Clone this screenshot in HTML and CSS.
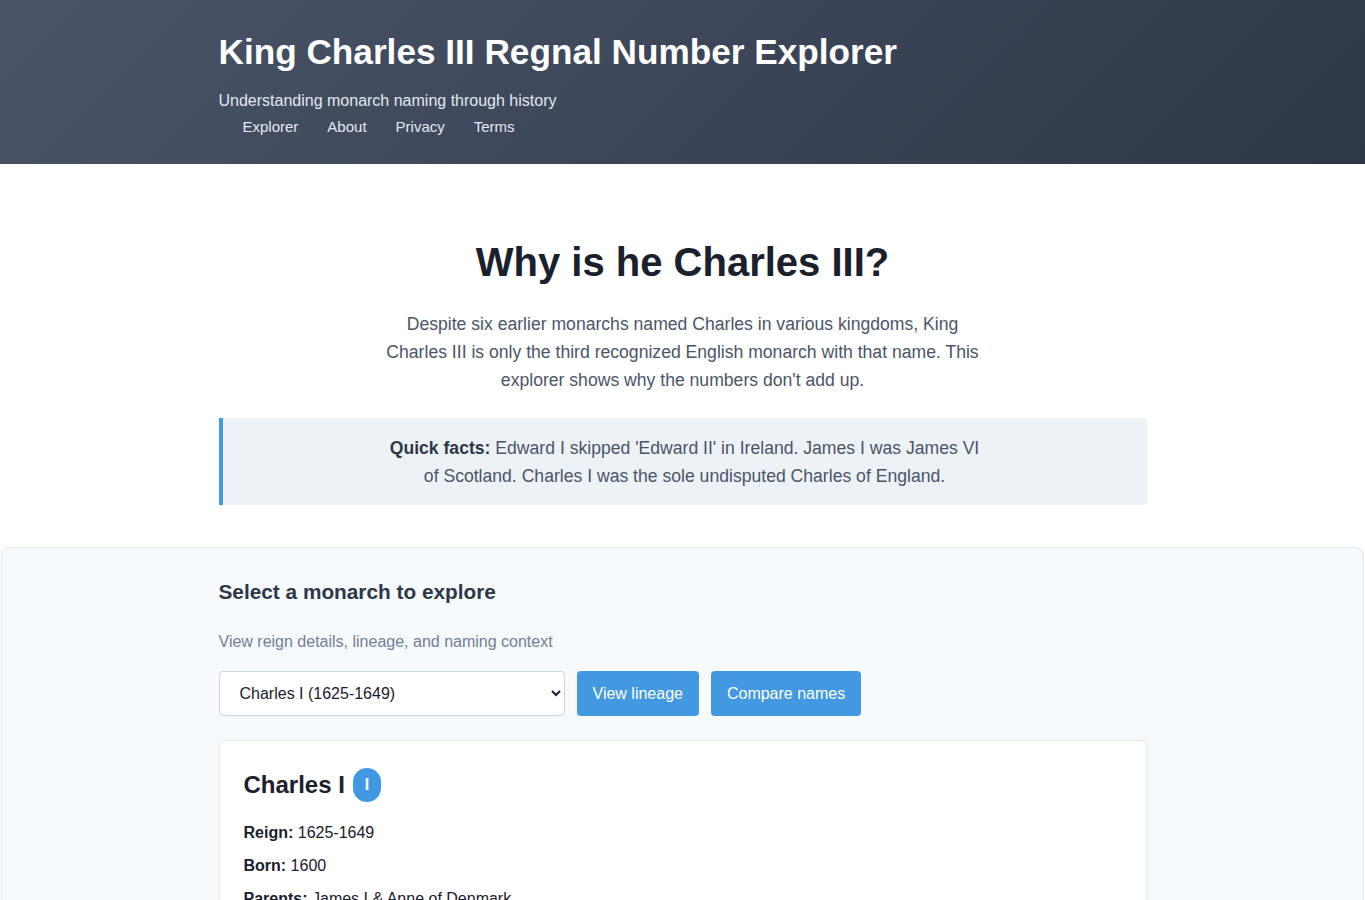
FILE: index.html
```html
<!DOCTYPE html>
<html lang="en">
<head>
    <meta charset="UTF-8">
    <meta name="viewport" content="width=device-width, initial-scale=1.0">
    <title>King Charles III Regnal Number Explorer</title>
    <link rel="stylesheet" href="styles.css">
</head>
<body>

    <header class="site-header">
        <div class="container">
            <h1>King Charles III Regnal Number Explorer</h1>
            <p class="tagline">Understanding monarch naming through history</p>
            <nav>
                <ul class="nav-links">
                    <li><a href="#">Explorer</a></li>
                    <li><a href="#">About</a></li>
                    <li><a href="#">Privacy</a></li>
                    <li><a href="#">Terms</a></li>
                </ul>
            </nav>
        </div>
    </header>

    <main>
        <section class="intro container">
            <h2>Why is he Charles III?</h2>
            <p class="lead">Despite six earlier monarchs named Charles in various kingdoms, King Charles III is only the third recognized English monarch with that name. This explorer shows why the numbers don't add up.</p>
            <div class="quick-facts">
                <p><strong>Quick facts:</strong> Edward I skipped 'Edward II' in Ireland. James I was James VI of Scotland. Charles I was the sole undisputed Charles of England.</p>
            </div>
        </section>

        <section class="explorer">
            <div class="container">
                <h3>Select a monarch to explore</h3>
                <p class="hint">View reign details, lineage, and naming context</p>
                <div class="controls">
                    <select id="monarch">
                        <option>Charles I (1625-1649)</option>
                        <option>Charles II (1660-1685)</option>
                        <option>Charles III (2022-)</option>
                    </select>
                    <button type="button">View lineage</button>
                    <button type="button">Compare names</button>
                </div>

                <div class="monarch-card">
                    <h4>Charles I <span class="numeral">I</span></h4>
                    <p><strong>Reign:</strong> 1625-1649</p>
                    <p><strong>Born:</strong> 1600</p>
                    <p><strong>Parents:</strong> James I &amp; Anne of Denmark</p>
                    <p><strong>Spouse:</strong> Henrietta Maria of France</p>
                </div>
            </div>
        </section>
    </main>

</body>
</html>
```

FILE: styles.css
```css
body {
    margin: 0;
    font-family: "Liberation Sans", Arial, sans-serif;
    color: #1a202c;
    background: #fff;
}
.container {
    max-width: 928px;
    margin: 0 auto;
}
.site-header {
    background: linear-gradient(135deg, #4a5568 0%, #2d3748 100%);
    color: #fff;
    height: 164px;
    box-sizing: border-box;
    padding-top: 31px;
}
.site-header h1 {
    margin: 0;
    font-size: 35.2px;
    line-height: 42px;
}
.tagline {
    margin: 18px 0 0;
    font-size: 16px;
    line-height: 20px;
    color: #e2e8f0;
}
.nav-links {
    list-style: none;
    margin: 7px 0 0;
    padding: 0 0 0 24px;
    display: flex;
    gap: 29px;
}
.nav-links a {
    color: #e2e8f0;
    text-decoration: none;
    font-size: 15px;
    line-height: 18px;
}
.intro {
    text-align: center;
    padding-top: 74px;
}
.intro h2 {
    margin: 0;
    font-size: 40px;
    line-height: 48px;
    color: #1a202c;
}
.lead {
    max-width: 600px;
    margin: 24px auto 0;
    font-size: 17.6px;
    line-height: 28px;
    color: #4a5568;
}
.quick-facts {
    margin-top: 24px;
    background: #edf2f7;
    border-left: 4px solid #4299e1;
    border-radius: 0 4px 4px 0;
    padding: 16px 24px 15px;
}
.quick-facts p {
    max-width: 600px;
    margin: 0 auto;
    font-size: 17.6px;
    line-height: 28px;
    color: #4a5568;
}
.quick-facts strong {
    color: #2d3748;
}
.explorer {
    margin: 42px 1px 0;
    background: #f7fafc;
    border: 1px solid #e2e8f0;
    border-radius: 8px;
    padding: 32px 0 40px;
}
.explorer h3 {
    margin: 0;
    font-size: 20.8px;
    line-height: 24px;
    color: #2d3748;
}
.hint {
    margin: 28px 0 0;
    font-size: 16px;
    line-height: 20px;
    color: #718096;
}
.controls {
    display: flex;
    gap: 12px;
    margin-top: 19px;
}
select {
    width: 346px;
    height: 45px;
    padding: 0 16px;
    font-family: inherit;
    font-size: 16px;
    color: #1a202c;
    background: #fff;
    border: 1px solid #cbd5e0;
    border-radius: 4px;
}
button {
    height: 45px;
    padding: 0 16px;
    font-family: inherit;
    font-size: 16px;
    color: #fff;
    background: #4299e1;
    border: none;
    border-radius: 4px;
    cursor: pointer;
}
button:hover {
    background: #3182ce;
}
.monarch-card {
    margin-top: 24px;
    background: #fff;
    border: 1px solid #e2e8f0;
    border-radius: 6px;
    padding: 27px 24px;
}
.monarch-card h4 {
    margin: 0 0 21px;
    font-size: 24px;
    line-height: 34px;
    color: #1a202c;
    display: flex;
    align-items: center;
    gap: 8px;
}
.numeral {
    display: inline-flex;
    align-items: center;
    justify-content: center;
    width: 28px;
    height: 34px;
    border-radius: 14px;
    background: #4299e1;
    color: #fff;
    font-size: 16px;
}
.monarch-card p {
    margin: 0 0 13px;
    font-size: 16px;
    line-height: 20px;
    color: #1a202c;
}
```
